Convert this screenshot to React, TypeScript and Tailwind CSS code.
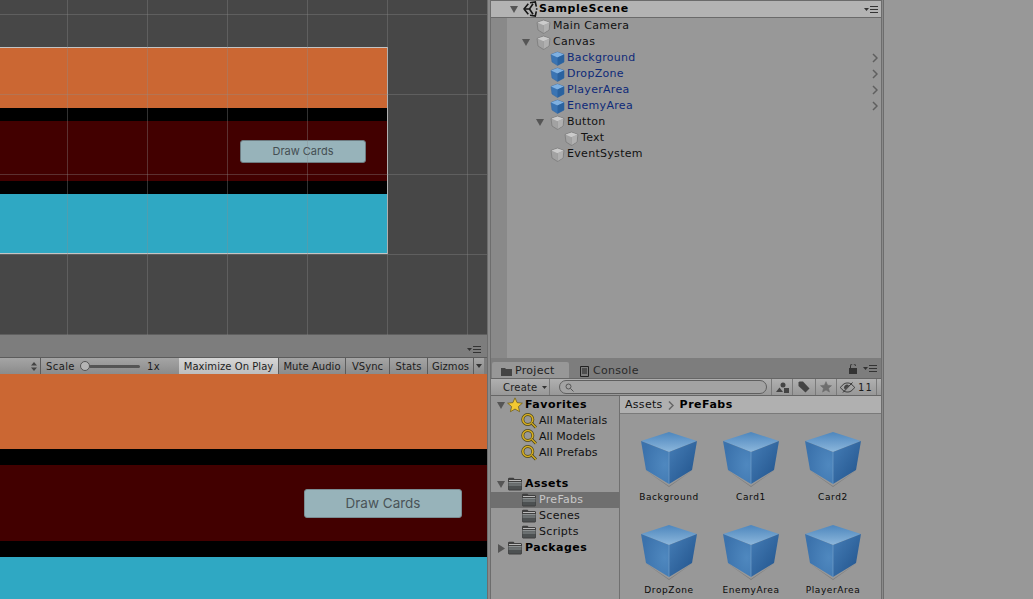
const UI_FONT = "font-['DejaVu_Sans',sans-serif]";

const HIERARCHY = [
  { name: "Main Camera", indent: 0 },
  { name: "Canvas", indent: 0, open: true },
  { name: "Background", indent: 1, prefab: true },
  { name: "DropZone", indent: 1, prefab: true },
  { name: "PlayerArea", indent: 1, prefab: true },
  { name: "EnemyArea", indent: 1, prefab: true },
  { name: "Button", indent: 1, open: true },
  { name: "Text", indent: 2 },
  { name: "EventSystem", indent: 1 },
];

const ASSETS = ["Background", "Card1", "Card2", "DropZone", "EnemyArea", "PlayerArea"];

const GRID_X = [67, 147, 227, 307, 387, 467];
const GRID_Y = [14, 94, 174, 254, 334];

const ArrowDown = () => (
  <svg width="8" height="8" viewBox="0 0 8 8" className="shrink-0">
    <path d="M0 1h8L4 8z" fill="#555" />
  </svg>
);

const ArrowRight = () => (
  <svg width="8" height="9" viewBox="0 0 8 9" className="shrink-0">
    <path d="M1 0v9l7-4.500z" fill="#555" />
  </svg>
);

const SmallCube = ({ prefab }: { prefab?: boolean }) =>
  prefab ? (
    <svg width="15" height="15" viewBox="0 0 15 15" className="shrink-0">
      <path d="M7.500 1l6.500 2.500v7.500L7.500 14.500 2 11 1 3.500z" fill="#3a74b3" stroke="#3a6a9f" strokeWidth="0.6" />
      <path d="M7.500 1L14 3.500 7.500 6.500 1 3.500z" fill="#7fb0e0" />
      <path d="M14 3.500v7.500l-6.500 3.500v-8z" fill="#2a629f" />
    </svg>
  ) : (
    <svg width="15" height="15" viewBox="0 0 15 15" className="shrink-0">
      <path d="M7.500 1L14 3.500 13 11l-5.500 3.500L2 11 1 3.500z" fill="#a2a2a2" stroke="#7e7e7e" strokeWidth="0.9" strokeLinejoin="round" />
      <path d="M7.500 1.500L13.500 3.600 7.500 6.300 1.500 3.600z" fill="#cbcbcb" />
      <path d="M7.500 6.300v7.700" stroke="#8a8a8a" strokeWidth="0.8" />
      <path d="M7.500 6.300v7.700l5-3 .7-7z" fill="#b0b0b0" />
    </svg>
  );

const UnityLogo = () => (
  <svg width="16" height="16" viewBox="0 0 16 16" className="shrink-0" fill="none" stroke="#161616" strokeWidth="1.6">
    <path d="M2 8L6.300 2.800M8 1.800l5.300-.8 1 4.700M14.700 7.200v1.600M14.300 10.300l-1 4.700-5.300-.8M6.300 13.200L2 8" />
    <path d="M1.500 8H7.500L11 2.800M7.500 8L11 13.200" />
  </svg>
);

const BurgerMenu = () => (
  <svg width="15" height="7" viewBox="0 0 15 7" className="shrink-0">
    <path d="M0 2h5L2.500 5z" fill="#333" />
    <path d="M6 0.500h8M6 3.500h8M6 6.500h8" stroke="#333" strokeWidth="1" />
  </svg>
);

const Chevron = () => (
  <svg width="6" height="10" viewBox="0 0 6 10">
    <path d="M1 1l4 4-4 4" fill="none" stroke="#5f5f5f" strokeWidth="1.500" />
  </svg>
);

const Folder = () => (
  <svg width="16" height="14" viewBox="0 0 16 14" className="shrink-0">
    <path d="M1 3V1.500L2 .8h4.500L7.500 2H14l1 1v9.500l-1 1H2l-1-1z" fill="#3f3f3f" />
    <path d="M2 3h12v1H2z" fill="#b9b9b9" />
    <path d="M1.500 5h13v1.500h-13z" fill="#8c9192" />
    <path d="M1.500 6.500h13V9h-13z" fill="#6b7071" />
    <path d="M1.500 9h13v3.500h-13z" fill="#4d5152" />
  </svg>
);

const SearchGold = () => (
  <svg width="16" height="16" viewBox="0 0 16 16" className="shrink-0">
    <circle cx="6.800" cy="6.500" r="5" fill="none" stroke="#4a4318" strokeWidth="3" />
    <circle cx="6.800" cy="6.500" r="5" fill="none" stroke="#d6ae22" strokeWidth="1.600" />
    <path d="M10.500 10l4.500 4.500" stroke="#4a4318" strokeWidth="3" />
    <path d="M10.500 10l4.500 4.500" stroke="#d6ae22" strokeWidth="1.300" />
  </svg>
);

const Star = ({ fill = "#f2c832", stroke = "#6d5a14", size = 15 }: { fill?: string; stroke?: string; size?: number }) => (
  <svg width={size} height={size} viewBox="0 0 15 15" className="shrink-0">
    <path d="M7.500.8l2 4.500 4.900.5-3.700 3.200 1.100 4.800-4.300-2.500-4.300 2.500 1.100-4.800L.6 5.800l4.900-.5z" fill={fill} stroke={stroke} strokeWidth="0.7" />
  </svg>
);

const BigCube = () => (
  <svg width="60" height="58" viewBox="-2 0 60 58" className="shrink-0">
    <defs>
      <linearGradient id="cubeTop" x1="0.500" y1="0" x2="0.500" y2="1">
        <stop offset="0" stopColor="#4d86bd" />
        <stop offset="1" stopColor="#8cb7dc" />
      </linearGradient>
      <radialGradient id="cubeLeft" cx="0.850" cy="0.550" r="0.800">
        <stop offset="0" stopColor="#4f88bf" />
        <stop offset="1" stopColor="#3b72ac" />
      </radialGradient>
      <linearGradient id="cubeRight" x1="0" y1="0" x2="1" y2="1">
        <stop offset="0" stopColor="#467eb7" />
        <stop offset="1" stopColor="#1f518a" />
      </linearGradient>
    </defs>
    <path d="M4 38l24 17 24-17-24 16z" fill="#000" opacity="0.18" />
    <path d="M28 0l28 9-28 11L0 9z" fill="url(#cubeTop)" />
    <path d="M0 9l28 11v32L5 38z" fill="url(#cubeLeft)" />
    <path d="M56 9L28 20v32l23-14z" fill="url(#cubeRight)" />
    <path d="M28 20v32" stroke="#7aa6cf" strokeWidth="0.6" />
  </svg>
);

function SceneView() {
  return (
    <div className="relative h-[335px] bg-[#474747] pt-[47px] overflow-hidden">
      <div className="flex w-[388px] flex-col border-t border-r border-b border-[#c4c4c4]">
        <div className="h-[60px] bg-[#cb6733]" />
        <div className="h-[13px] bg-black" />
        <div className="flex h-[60px] items-center justify-end bg-[#420000] pr-[21px]">
          <div className="flex h-[23px] w-[126px] items-center justify-center rounded-[3px] border border-[#6d7a80] bg-[#97b3ba] font-['Inter',sans-serif] text-[11px] tracking-normal text-[#454f53]">
            Draw Cards
          </div>
        </div>
        <div className="h-[13px] bg-black" />
        <div className="h-[59px] bg-[#2fa8c3]" />
      </div>
      {GRID_X.map((x) => (
        <div key={x} className="absolute top-0 bottom-0 w-px bg-[#8c8c8c]/35" style={{ left: x }} />
      ))}
      {GRID_Y.map((y) => (
        <div key={y} className="absolute left-0 right-0 h-px bg-[#8c8c8c]/35" style={{ top: y }} />
      ))}
    </div>
  );
}

const ToolbarButton = ({ label, width, active }: { label: string; width: string; active?: boolean }) => (
  <div
    className={`flex h-full items-center justify-center border-r border-[#5c5c5c] ${width} ${
      active ? "bg-gradient-to-b from-[#d6d6d6] to-[#bdbdbd]" : ""
    }`}
  >
    {label}
  </div>
);

function GameToolbar() {
  return (
    <div className="flex h-[17px] items-center border-t border-[#5c5c5c] bg-gradient-to-b from-[#a5a5a5] to-[#8b8b8b] text-[10px] tracking-[0.05px] text-[#1c1c1c]">
      <div className="flex h-full w-[41px] items-center justify-end border-r border-[#5c5c5c] pr-[3px]">
        <svg width="6" height="9" viewBox="0 0 6 9">
          <path d="M3 0l3 3.500H0zM3 9L0 5.500h6z" fill="#444" />
        </svg>
      </div>
      <span className="ml-[5px] w-[34px] tracking-[0.4px]">Scale</span>
      <div className="flex w-[60px] items-center">
        <div className="z-10 h-[10px] w-[10px] shrink-0 rounded-full border border-[#555] bg-[#b5b5b5]" />
        <div className="-ml-px h-[3px] w-[51px] rounded-full bg-[#555]" />
      </div>
      <span className="ml-[7px] w-[32px] tracking-[0.5px]">1x</span>
      <ToolbarButton label="Maximize On Play" width="w-[100px]" active />
      <ToolbarButton label="Mute Audio" width="w-[67px]" />
      <ToolbarButton label="VSync" width="w-[44px]" />
      <ToolbarButton label="Stats" width="w-[38px]" />
      <div className="flex h-full w-[56px] items-center">
        <span className="w-[45px] text-center">Gizmos</span>
        <div className="flex h-full w-[11px] items-center justify-center border-l border-[#5c5c5c]">
          <svg width="6" height="4" viewBox="0 0 6 4">
            <path d="M0 0h6L3 4z" fill="#333" />
          </svg>
        </div>
      </div>
      <div className="h-full w-[3px] bg-[#7d7d7d]" />
    </div>
  );
}

function GameView() {
  return (
    <div className="flex h-[225px] flex-col">
      <div className="h-[75px] bg-[#cb6733]" />
      <div className="h-[16px] bg-black" />
      <div className="flex h-[76px] items-center justify-end bg-[#420000] pr-[25px]">
        <div className="flex h-[29px] w-[158px] items-center justify-center rounded-[3px] border border-[#7a8c92] bg-[#97b3ba] font-['Inter',sans-serif] text-[13.5px] tracking-normal text-[#4a5458]">
          Draw Cards
        </div>
      </div>
      <div className="h-[16px] bg-black" />
      <div className="h-[42px] bg-[#2fa8c3]" />
    </div>
  );
}

function Hierarchy() {
  return (
    <div className="flex h-[358px] flex-col">
      <div className="flex h-[18px] items-center border-t border-b border-[#6a6a6a] bg-[#b3b3b3] pl-[19px] pr-[2px]">
        <ArrowDown />
        <span className="ml-[4px]">
          <UnityLogo />
        </span>
        <span className="ml-[1px] text-[11px] font-bold tracking-[0.6px] text-black">SampleScene</span>
        <span className="ml-auto">
          <BurgerMenu />
        </span>
      </div>
      <div className="flex flex-1">
        <div className="w-[16px] bg-[#898989]" />
        <div className="flex-1 pr-[3px]">
          {HIERARCHY.map((row) => (
            <div
              key={row.name}
              className={`flex h-[16px] items-center ${row.prefab ? "text-[#0e2a78]" : "text-[#111]"}`}
              style={{ paddingLeft: 29 + row.indent * 14 }}
            >
              <div className="flex w-[14px] shrink-0 -ml-[14px] justify-start">
                {row.open && <ArrowDown />}
              </div>
              <SmallCube prefab={row.prefab} />
              <span className="ml-[2px]">{row.name}</span>
              {row.prefab && (
                <span className="ml-auto">
                  <Chevron />
                </span>
              )}
            </div>
          ))}
        </div>
      </div>
    </div>
  );
}

const TreeRow = ({
  label,
  bold,
  selected,
  tight,
  icon,
  arrow,
  className = "",
}: {
  label: string;
  bold?: boolean;
  selected?: boolean;
  tight?: boolean;
  icon: React.ReactNode;
  arrow?: React.ReactNode;
  className?: string;
}) => (
  <div
    className={`flex h-[16px] items-center ${bold ? "pl-[6px] tracking-[0.5px]" : "pl-[30px]"} ${
      selected ? "bg-[#6f6f6f] text-[#c8c8c8]" : "text-[#111]"
    } ${bold ? "font-bold text-black" : ""} ${tight ? "tracking-[0.05px]" : ""} ${className}`}
  >
    {arrow && <span className="mr-[2px] flex w-[8px]">{arrow}</span>}
    {icon}
    <span className="ml-[2px]">{label}</span>
  </div>
);

function ProjectBrowser() {
  return (
    <div className="flex h-[241px] flex-col">
      <div className="flex h-[20px] items-end bg-[#7d7d7d] pl-[1px] pr-[3px]">
        <div className="flex h-[16px] w-[77px] items-center rounded-t-[2px] bg-[#979797] pl-[9px] pt-[2px] text-[11px] text-[#222]">
          <svg width="11" height="9" viewBox="0 0 11 9">
            <path d="M0 1h4l1 1h6v7H0z" fill="#444" />
          </svg>
          <span className="ml-[3px]">Project</span>
        </div>
        <div className="ml-[11px] flex h-[16px] items-center pt-[2px] text-[11px] text-[#2a2a2a]">
          <svg width="9" height="11" viewBox="0 0 9 11">
            <path d="M.5.500h8v10h-8zM2 3h5M2 5h5M2 7h5" fill="none" stroke="#222" />
          </svg>
          <span className="ml-[4px]">Console</span>
        </div>
        <div className="ml-auto flex h-[17px] items-center gap-[6px] pb-[2px]">
          <svg width="8" height="10" viewBox="0 0 8 10">
            <path d="M0 4h8v6H0z" fill="#333" />
            <path d="M1.500 4V2a2.500 2.500 0 0 1 5 0" fill="none" stroke="#333" />
          </svg>
          <BurgerMenu />
        </div>
      </div>
      <div className="flex h-[18px] items-center border-t border-b border-[#666] bg-gradient-to-b from-[#b0b0b0] to-[#989898] text-[10px] tracking-[0.2px] text-[#1c1c1c]">
        <div className="flex h-full w-[59px] items-center border-r border-[#7a7a7a] pl-[12px]">
          <span>Create</span>
          <svg width="5" height="3" viewBox="0 0 5 3" className="ml-[5px]">
            <path d="M0 0h5L2.500 3z" fill="#333" />
          </svg>
        </div>
        <div className="ml-[9px] flex h-[14px] w-[208px] items-center rounded-full border border-[#5f5f5f] bg-[#a3a3a3] pl-[5px]">
          <svg width="9" height="9" viewBox="0 0 9 9">
            <circle cx="3.500" cy="3.500" r="2.500" fill="none" stroke="#555" />
            <path d="M5.500 5.500L8.500 8.500" stroke="#555" />
          </svg>
        </div>
        <div className="ml-[4px] flex h-full w-[22px] items-center justify-center border-x border-[#7a7a7a]">
          <svg width="13" height="11" viewBox="0 0 13 11">
            <circle cx="7" cy="3" r="2.500" fill="#444" />
            <path d="M3.500 5.500L7 10H0zM8 6h5v5H8z" fill="#444" />
          </svg>
        </div>
        <div className="flex h-full w-[23px] items-center justify-center border-r border-[#7a7a7a]">
          <svg width="12" height="12" viewBox="0 0 12 12">
            <path d="M.5 1.500l1-1h3.500L11.500 7.500 7.500 11.500 .5 5z" fill="#444" />
          </svg>
        </div>
        <div className="flex h-full w-[21px] items-center justify-center border-r border-[#7a7a7a]">
          <Star fill="#6e6e6e" stroke="#6e6e6e" size={12} />
        </div>
        <div className="flex h-full w-[40px] items-center justify-center border-r border-[#7a7a7a] tracking-[1.5px] font-['DejaVu_Sans_Mono',monospace]">
          <svg width="15" height="11" viewBox="0 0 15 11" className="mr-[3px]">
            <path d="M.5 5.500C3 2 5 1 7.500 1s4.500 1 7 4.500C12 9 10 10 7.500 10S3 9 .5 5.500z" fill="none" stroke="#333" />
            <path d="M5 7.500a2.500 2.500 0 0 1 4-4z" fill="#444" />
            <path d="M3 10.500L12.500 .5" stroke="#333" />
          </svg>
          11
        </div>
      </div>
      <div className="flex flex-1 overflow-hidden">
        <div className="w-[129px] shrink-0 border-r border-[#707070] pt-[1px]">
          <TreeRow label="Favorites" bold icon={<Star size={16} />} arrow={<ArrowDown />} />
          <TreeRow label="All Materials" tight icon={<SearchGold />} />
          <TreeRow label="All Models" tight icon={<SearchGold />} />
          <TreeRow label="All Prefabs" tight icon={<SearchGold />} />
          <TreeRow label="Assets" bold icon={<Folder />} arrow={<ArrowDown />} className="mt-[15px]" />
          <TreeRow label="PreFabs" selected icon={<Folder />} />
          <TreeRow label="Scenes" icon={<Folder />} />
          <TreeRow label="Scripts" icon={<Folder />} />
          <TreeRow label="Packages" bold icon={<Folder />} arrow={<ArrowRight />} />
        </div>
        <div className="flex flex-1 flex-col">
          <div className="flex h-[18px] items-center border-b border-[#7a7a7a] bg-[#b0b0b0] pl-[5px] pt-[2px] text-[#111]">
            <span>Assets</span>
            <span className="ml-[5px] mr-[6px]">
              <svg width="6" height="9" viewBox="0 0 6 9" className="block">
                <path d="M1 .5l4 4-4 4" fill="none" stroke="#666" strokeWidth="1.500" />
              </svg>
            </span>
            <span className="font-bold tracking-[0.5px] text-black">PreFabs</span>
          </div>
          <div className="grid grid-cols-[82px_82px_82px] pl-[8px] pt-[18px]">
            {ASSETS.map((name) => (
              <div key={name} className="flex h-[93px] flex-col items-center">
                <BigCube />
                <span className="mt-[1px] text-[9px] tracking-[0.6px] text-[#0a0a0a]">{name}</span>
              </div>
            ))}
          </div>
        </div>
      </div>
    </div>
  );
}

export default function App() {
  return (
    <div className={`flex h-[599px] w-[1033px] overflow-hidden bg-[#989898] text-[11px] tracking-[0.3px] ${UI_FONT}`}>
      <div className="flex w-[487px] shrink-0 flex-col">
        <SceneView />
        <div className="flex h-[22px] items-center justify-end bg-[#7d7d7d] pr-[5px] pt-[6px]">
          <BurgerMenu />
        </div>
        <GameToolbar />
        <GameView />
      </div>
      <div className="w-[4px] shrink-0 border-x border-[#6d6d6d] bg-[#8a8a8a]" />
      <div className="flex w-[390px] shrink-0 flex-col">
        <Hierarchy />
        <ProjectBrowser />
      </div>
      <div className="w-[3px] shrink-0 border-x border-[#6d6d6d] bg-[#8a8a8a]" />
      <div className="flex-1 bg-[#989898]" />
    </div>
  );
}
